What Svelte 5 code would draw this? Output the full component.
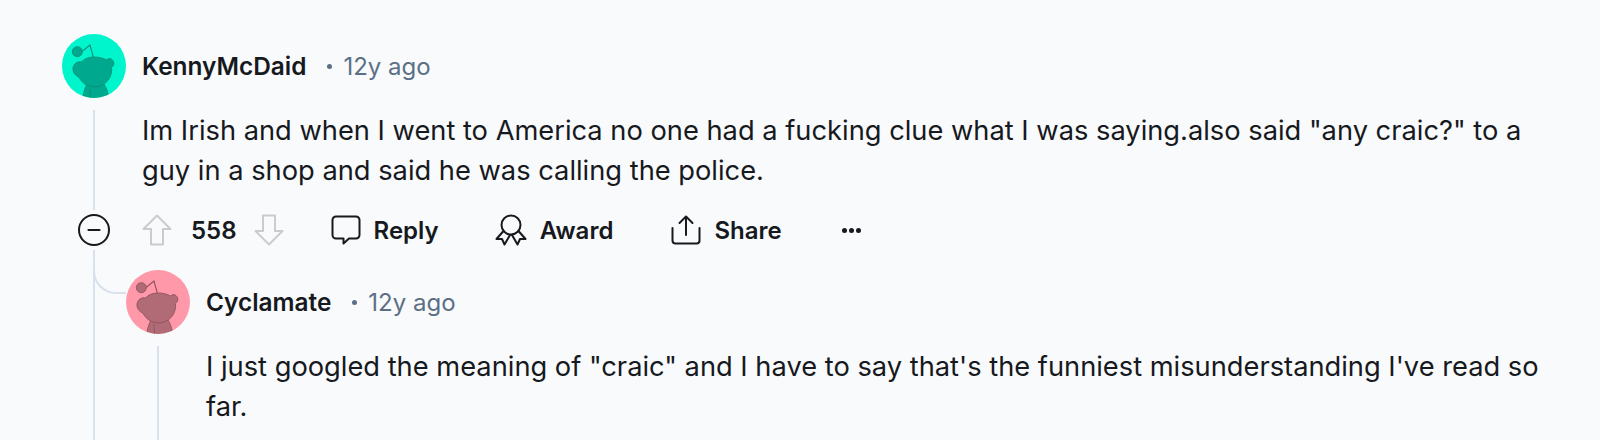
<script>
</script>

{#snippet avatar(bg, fill, line)}
  <svg class="avatar" viewBox="0 0 64 64" aria-hidden="true">
    <defs><clipPath id={"c" + bg.slice(1)}><circle cx="32" cy="32" r="32" /></clipPath></defs>
    <circle cx="32" cy="32" r="32" fill={bg} />
    <g clip-path={"url(#c" + bg.slice(1) + ")"} fill={fill} stroke={line} stroke-width="0.9">
      <path d="M20 17.500 L28 11 L31.500 24" fill="none" stroke-width="1.100" />
      <circle cx="15.300" cy="17.700" r="5" />
      <path d="M25 50 C22.500 55 21 60 20.500 66 L47 66 C46.500 60 45 55 42 50 Z" />
      <path d="M28 54 L28.500 66" fill="none" />
      <path d="M32 23 C37 23 41 24 44.500 26 C46 24 50 24 51.500 27.500 C52.500 30.500 51 32.500 49.500 33.500 C50.500 41 46 50.500 36 52.500 C28 54 20 50 17 43 C13.500 42 10.500 38 11 34 C11.500 30 15.500 27 19.500 28 C22.500 24.500 27 23 32 23 Z" />
    </g>
  </svg>
{/snippet}

{#snippet header(name, time)}
  <div class="header">
    <span class="name">{name}</span>
    <span class="dot"></span>
    <span class="time">{time}</span>
  </div>
{/snippet}

<div class="page">
  <article class="comment">
    {@render avatar("#00f5cc", "#00a88e", "#0a8f79")}
    {@render header("KennyMcDaid", "12y ago")}
    <div class="rail top"></div>
    <p class="body">Im Irish and when I went to America no one had a fucking clue what I was saying.also said "any craic?" to a guy in a shop and said he was calling the police.</p>
    <button class="collapse" aria-label="Collapse">
      <svg viewBox="0 0 32 32" width="32" height="32"><circle cx="16" cy="16" r="15" fill="none" stroke="#16191d" stroke-width="2" /><path d="M10.500 16h11" stroke="#16191d" stroke-width="2.200" stroke-linecap="round" /></svg>
    </button>
    <div class="actions">
      <div class="votes">
        <svg class="arrow" viewBox="0 0 30 32" width="30" height="32"><path d="M15 1.500 L28.500 15 L21 15 L21 30.500 L9 30.500 L9 15 L1.500 15 Z" /></svg>
        <span class="score">558</span>
        <svg class="arrow" viewBox="0 0 30 32" width="30" height="32"><path d="M15 30.500 L28.500 17 L21 17 L21 1.500 L9 1.500 L9 17 L1.500 17 Z" /></svg>
      </div>
      <button class="act reply">
        <svg viewBox="0 0 30 30" width="30" height="30"><path d="M5 1.500 H25 A3.500 3.500 0 0 1 28.500 5 V20 A3.500 3.500 0 0 1 25 23.500 H18 L12.500 28.500 V23.500 H5 A3.500 3.500 0 0 1 1.500 20 V5 A3.500 3.500 0 0 1 5 1.500 Z" /></svg>
        Reply
      </button>
      <button class="act award">
        <svg viewBox="0 0 32 32" width="32" height="32"><circle cx="16" cy="11" r="9.500" /><path d="M8.500 17 L1.500 25 L7 25 L9.500 30.500 L15 21 M23.500 17 L30.500 25 L25 25 L22.500 30.500 L17 21" /></svg>
        Award
      </button>
      <button class="act share">
        <svg viewBox="0 0 30 30" width="30" height="30"><path d="M15 20 V2 M8.500 8 L15 1.500 L21.500 8 M1.500 13 V25.500 A3 3 0 0 0 4.500 28.500 H25.500 A3 3 0 0 0 28.500 25.500 V13" /></svg>
        Share
      </button>
      <span class="more"><i></i><i></i><i></i></span>
    </div>
    <div class="rail bottom"></div>
    <article class="comment child">
      <span class="elbow"></span>
      {@render avatar("#ff99a9", "#b16b76", "#8f525e")}
      {@render header("Cyclamate", "12y ago")}
      <div class="rail top long"></div>
      <p class="body">I just googled the meaning of "craic" and I have to say that's the funniest misunderstanding I've read so far.</p>
    </article>
  </article>
</div>

<style>
  :global(body) {
    margin: 0;
    background: #f9fafc;
  }
  .page {
    height: 440px;
    overflow: hidden;
    padding: 34px 0 0 62px;
    box-sizing: border-box;
    background: #f9fafc;
    font-family: Inter, "Liberation Sans", sans-serif;
    color: #16191d;
  }
  .comment {
    display: grid;
    grid-template-columns: 64px 1fr;
    column-gap: 16px;
    width: 1498px;
    box-sizing: border-box;
  }
  .child {
    position: relative;
    margin: 24px 0 0 -16px;
    width: auto;
  }
  .avatar {
    width: 64px;
    height: 64px;
    display: block;
  }
  .header {
    display: flex;
    align-items: center;
    height: 64px;
  }
  .name {
    font-size: 24.4px;
    font-weight: 600;
  }
  .dot {
    width: 5px;
    height: 5px;
    border-radius: 50%;
    background: #5b6f85;
    margin: 0 11px 0 21px;
  }
  .time {
    font-size: 24px;
    color: #5b6f85;
  }
  .rail {
    width: 2px;
    background: #d8e1ec;
    justify-self: center;
  }
  .top {
    margin-top: 12px;
    margin-bottom: 4px;
  }
  .top.long {
    height: 200px;
  }
  .bottom {
    margin-top: 4px;
  }
  .body {
    margin: 13px 0 0;
    font-size: 27.27px;
    line-height: 40px;
    min-height: 80px;
    padding-bottom: 23px;
  }
  .collapse {
    border: 0;
    background: none;
    padding: 0;
    width: 32px;
    height: 32px;
    justify-self: center;
    align-self: center;
  }
  .collapse svg {
    display: block;
  }
  .actions {
    display: flex;
    align-items: center;
    height: 32px;
  }
  .votes {
    display: flex;
    align-items: center;
  }
  .score {
    font-size: 24px;
    font-weight: 600;
    margin: 0 17px 0 19px;
  }
  .arrow {
    display: block;
  }
  .arrow path {
    fill: none;
    stroke: #c9cccf;
    stroke-width: 2;
    stroke-linejoin: round;
  }
  .act {
    border: 0;
    background: none;
    padding: 0;
    font: 600 24px Inter, "Liberation Sans", sans-serif;
    color: #16191d;
    display: flex;
    align-items: center;
    gap: 13px;
  }
  .act svg {
    display: block;
    fill: none;
    stroke: #16191d;
    stroke-width: 2;
    stroke-linejoin: round;
    stroke-linecap: round;
  }
  .reply {
    margin-left: 47px;
  }
  .award {
    margin-left: 56px;
  }
  .share {
    margin-left: 58px;
  }
  .more {
    display: flex;
    gap: 2px;
    margin-left: 60px;
  }
  .more i {
    width: 5px;
    height: 5px;
    border-radius: 50%;
    background: #16191d;
  }
  .elbow {
    position: absolute;
    left: -33px;
    top: 0;
    width: 33px;
    height: 24px;
    box-sizing: border-box;
    border-left: 2px solid #d8e1ec;
    border-bottom: 2px solid #d8e1ec;
    border-bottom-left-radius: 23px;
  }
</style>
